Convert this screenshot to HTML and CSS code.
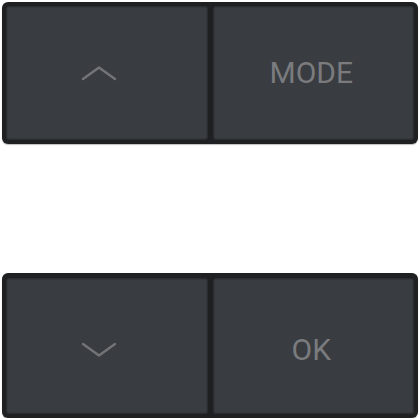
FILE: index.html
```html
<!DOCTYPE html>
<html>
<head>
<meta charset="utf-8">
<link rel="stylesheet" href="styles.css">
</head>
<body>
<div class="page">
  <div class="panel panel-top">
    <div class="key">
      <svg class="chev" width="36" height="16" viewBox="0 0 36 16"><path d="M2 14 L18 2.5 L34 14" fill="none" stroke="#727477" stroke-width="2.4" stroke-linecap="round" stroke-linejoin="round"/></svg>
    </div>
    <div class="key"><span class="label">MODE</span></div>
  </div>
  <div class="panel panel-bottom">
    <div class="key key-low">
      <svg class="chev" width="36" height="16" viewBox="0 0 36 16"><path d="M2 2 L18 13.5 L34 2" fill="none" stroke="#727477" stroke-width="2.4" stroke-linecap="round" stroke-linejoin="round"/></svg>
    </div>
    <div class="key key-low"><span class="label">OK</span></div>
  </div>
</div>
</body>
</html>
```
FILE: styles.css
```css
html, body {
  margin: 0;
  padding: 0;
  background: #ffffff;
}
.page {
  padding: 2px 2px 0 2px;
  display: flex;
  flex-direction: column;
}
.panel {
  box-sizing: border-box;
  display: flex;
  gap: 5px;
  padding: 4px;
  background: #1f2022;
  border-radius: 6px;
  box-shadow: 0 1px 1px rgba(0,0,0,0.25);
}
.panel-top {
  height: 142px;
}
.panel-bottom {
  height: 145px;
  margin-top: 129px;
  padding-top: 5px;
}
.key {
  flex: 1;
  box-sizing: border-box;
  display: flex;
  align-items: center;
  justify-content: center;
  background: #393c40;
  border: 1px solid #2b2d30;
  border-radius: 3px;
  box-shadow: inset 0 0 0 1px #34373a;
}
.key-low {
  padding-top: 8px;
}
.chev {
  display: block;
  margin-right: 16px;
}
.label {
  font-family: Roboto, "Liberation Sans", sans-serif;
  font-size: 30px;
  color: #797b7e;
  line-height: 1;
  margin-right: 4px;
}
```
